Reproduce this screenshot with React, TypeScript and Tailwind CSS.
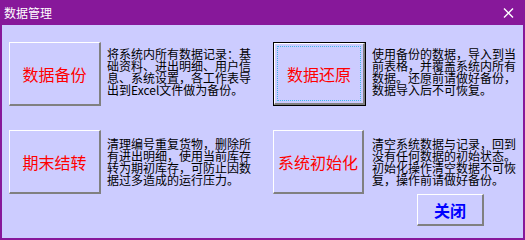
const font = {
  fontFamily: '"SimSun", "Noto Sans CJK SC", sans-serif',
};

const Desc = ({ lines, className }: { lines: string[]; className: string }) => {
  return (
    <div className={"text-[12px] leading-[12px] text-black whitespace-nowrap " + className}>
      {lines.map((line, i) => (
        <div key={i}>{line}</div>
      ))}
    </div>
  );
};

const Bevel = ({
  label,
  className,
  focused,
}: {
  label: string;
  className: string;
  focused?: boolean;
}) => {
  if (focused) {
    return (
      <div className={"border border-black flex " + className}>
        <div className="flex-1 flex border-t border-l border-t-white border-l-white border-r-2 border-b-2 border-r-[#808080] border-b-[#808080] p-[2px]">
          <div className="flex-1 flex items-center justify-center border border-dotted border-[#3fb8e8] text-[16px] text-[#ff0000]">
            {label}
          </div>
        </div>
      </div>
    );
  }
  return (
    <div
      className={
        "flex items-center justify-center border-t border-l border-t-white border-l-white border-r-2 border-b-2 border-r-[#808080] border-b-[#808080] text-[16px] text-[#ff0000] " +
        className
      }
    >
      {label}
    </div>
  );
};

export default function App() {
  return (
    <div className="w-[525px] h-[240px] bg-[#87189a] flex flex-col" style={font}>
      <div className="h-[25px] flex items-center justify-between pl-[4px] pr-[11px] text-white text-[12px]">
        <span>数据管理</span>
        <svg width="11" height="10" viewBox="0 0 11 10">
          <path d="M1 0.5 L10 9.5 M10 0.5 L1 9.5" stroke="#ffffff" strokeWidth="1.4" />
        </svg>
      </div>
      <div className="flex-1 mx-[2px] mb-[2px] bg-[#ccccff] flex flex-col pt-[17px] pl-[7px]">
        <div className="flex">
          <Bevel label="数据备份" className="w-[92px] h-[64px]" />
          <Desc
            className="ml-[6px] w-[146px] pt-[6px]"
            lines={[
              "将系统内所有数据记录：基",
              "础资料、进出明细、用户信",
              "息、系统设置，各工作表导",
              "出到Excel文件做为备份。",
            ]}
          />
          <Bevel label="数据还原" focused className="ml-[20px] w-[93px] h-[64px]" />
          <Desc
            className="ml-[6px] w-[146px] pt-[6px]"
            lines={[
              "使用备份的数据，导入到当",
              "前表格，并覆盖系统内所有",
              "数据。还原前请做好备份，",
              "数据导入后不可恢复。",
            ]}
          />
        </div>
        <div className="flex mt-[24px]">
          <Bevel label="期末结转" className="w-[92px] h-[64px]" />
          <Desc
            className="ml-[6px] w-[146px] pt-[8px]"
            lines={[
              "清理编号重复货物，删除所",
              "有进出明细，使用当前库存",
              "转为期初库存，可防止因数",
              "据过多造成的运行压力。",
            ]}
          />
          <Bevel label="系统初始化" className="ml-[20px] w-[91px] h-[64px]" />
          <div className="ml-[8px] flex flex-col pt-[8px]">
            <Desc
              className="w-[146px]"
              lines={[
                "清空系统数据与记录，回到",
                "没有任何数据的初始状态。",
                "初始化操作清空数据不可恢",
                "复，操作前请做好备份。",
              ]}
            />
            <div className="mt-[8px] ml-[45px] w-[67px] h-[32px] flex items-center justify-center border-t border-l border-t-white border-l-white border-r-2 border-b-2 border-r-[#808080] border-b-[#808080] text-[16px] font-bold text-[#0000ff]">
              关闭
            </div>
          </div>
        </div>
      </div>
    </div>
  );
}
